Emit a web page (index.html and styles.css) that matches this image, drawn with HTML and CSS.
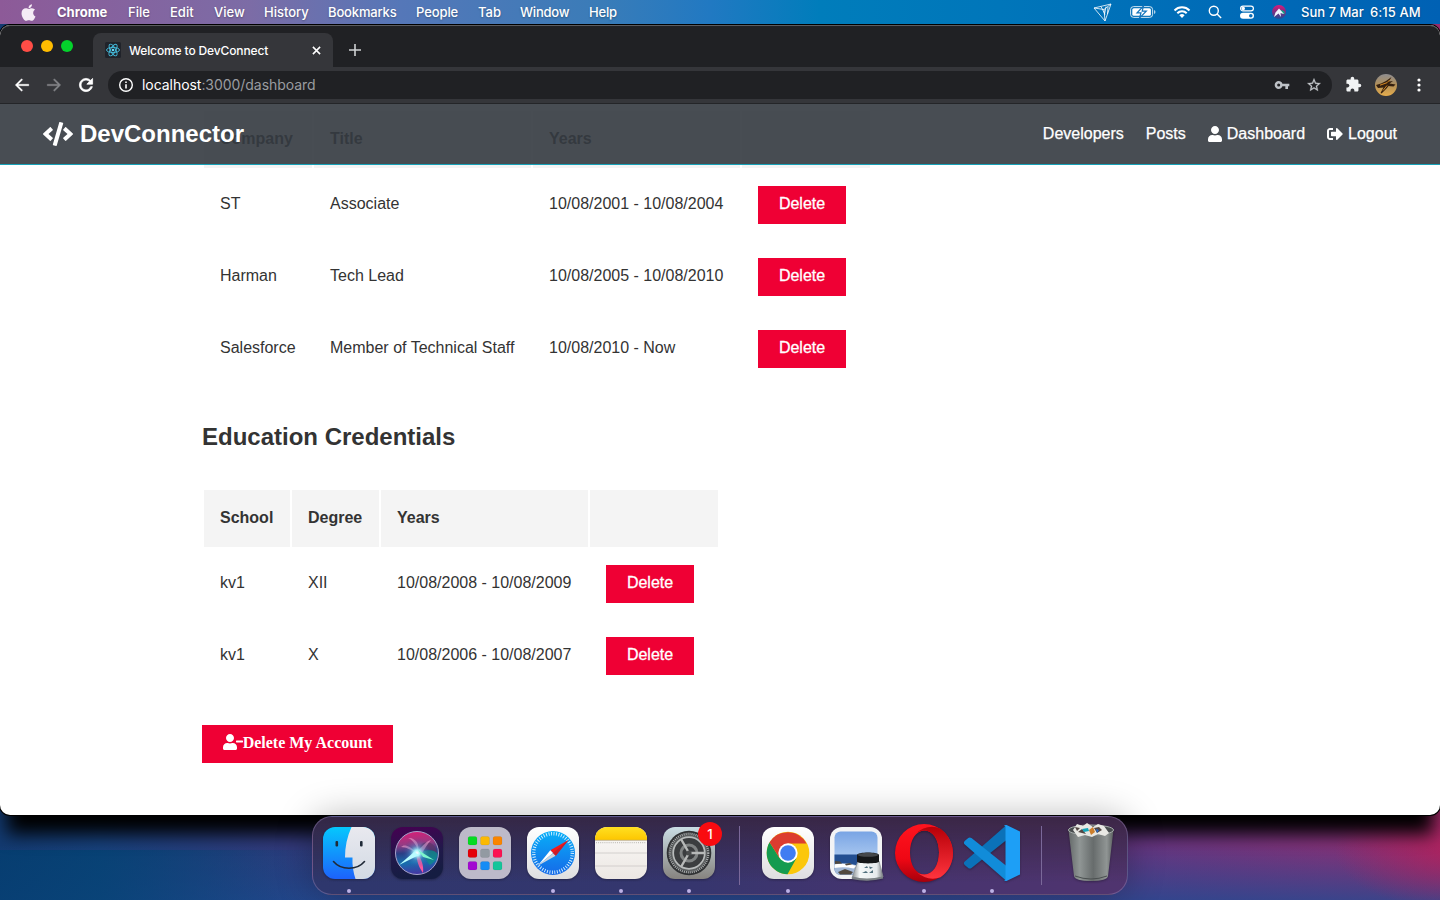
FILE: index.html
```html
<!DOCTYPE html>
<html lang="en">
<head>
<meta charset="utf-8">
<title>Welcome to DevConnect</title>
<link rel="stylesheet" href="styles.css">
</head>
<body>
<div class="desktop">
  <header class="menubar">
    <div class="menus">
      <svg class="apple" viewBox="0 0 384 512"><path d="M318.700 268.700c-.2-36.700 16.400-64.400 50-84.800-18.800-26.900-47.200-41.700-84.700-44.600-35.500-2.800-74.300 20.700-88.500 20.700-15 0-49.400-19.700-76.400-19.700C63.300 141.200 4 184.800 4 273.500q0 39.300 14.400 81.200c12.800 36.700 59 126.700 107.200 125.200 25.200-.6 43-17.900 75.800-17.900 31.800 0 48.300 17.900 76.400 17.900 48.600-.7 90.400-82.500 102.600-119.300-65.200-30.700-61.700-90-61.700-91.900zm-56.600-164.200c27.300-32.400 24.800-61.900 24-72.500-24.100 1.400-52 16.400-67.900 34.900-17.500 19.800-27.800 44.300-25.600 71.900 26.100 2 49.900-11.400 69.500-34.300z"/></svg>
      <b class="m-app">Chrome</b><span class="m-file">File</span><span class="m-edit">Edit</span><span class="m-view">View</span><span class="m-history">History</span><span class="m-book">Bookmarks</span><span class="m-people">People</span><span class="m-tab">Tab</span><span class="m-window">Window</span><span class="m-help">Help</span>
    </div>
    <div class="status">
      <svg class="s-tri" viewBox="0 0 20 20" fill="none" stroke="#fff" stroke-width=".8"><path d="M1 6l17-4-6 17zM1 6l10 1.500 7-5.500M11 7.500l1 11.500M13 4.500l-1.500 8M15 5l-.5 7M8 4.500l4 8"/></svg>
      <svg class="s-bat" viewBox="0 0 26 14"><rect x=".6" y="1.600" width="22" height="10.800" rx="3" fill="none" stroke="#fff" opacity=".8"/><rect x="2.300" y="3.300" width="18.600" height="7.400" rx="1.500" fill="#fff"/><path d="M24 5v4q1.500-.5 1.500-2T24 5z" fill="#fff" opacity=".7"/><path d="M13.500 1L7 7.800h4L9.500 13 16.300 6.200h-4.100z" fill="#fff" stroke="#1274bb" stroke-width="1.200"/></svg>
      <svg class="s-wifi" viewBox="0 0 18 14" fill="none" stroke="#fff" stroke-width="2"><path d="M1.500 5.500a10.500 10.500 0 0 1 15 0M4.300 8.300a6.600 6.600 0 0 1 9.400 0"/><path d="M9 13l-2.600-2.700a3.700 3.700 0 0 1 5.200 0z" fill="#fff" stroke="none"/></svg>
      <svg class="s-search" viewBox="0 0 14 14" fill="none" stroke="#fff" stroke-width="1.400"><circle cx="5.800" cy="5.800" r="4.500"/><path d="M9.100 9.100l4 4"/></svg>
      <svg class="s-cc" viewBox="0 0 16 14"><rect x="1.600" y="1.100" width="12.800" height="4.800" rx="2.400" fill="none" stroke="#fff" stroke-width="1.200"/><circle cx="4.300" cy="3.500" r="1.700" fill="#fff"/><rect x="1" y="7.700" width="14" height="6" rx="3" fill="#fff"/><circle cx="11.800" cy="10.700" r="1.800" fill="#086db7"/></svg>
      <svg class="s-siri" viewBox="0 0 16 16"><defs><linearGradient id="ms" x2="0" y2="1"><stop offset="0" stop-color="#e0187a"/><stop offset=".4" stop-color="#8c2a80"/><stop offset="1" stop-color="#1f4f96"/></linearGradient></defs><circle cx="8" cy="8" r="7" fill="url(#ms)"/><path d="M9 6.500c2-1 5 0 5 3l-3 .5z" fill="#15a087"/><path d="M8 4.500l5 5.500-3.500-1 .5 4-2.500-3.500L3 13l1.500-4.500z" fill="#eef4ff"/></svg>
      <span class="date">Sun 7 Mar</span><span class="time">6:15 AM</span>
    </div>
  </header>

  <main class="window">
    <div class="tabstrip">
      <div class="lights"><i class="red"></i><i class="yellow"></i><i class="green"></i></div>
      <div class="tab">
        <svg class="favicon" viewBox="0 0 16 16"><rect width="16" height="16" rx="1.500" fill="#20232a"/><g fill="none" stroke="#45bfe0" stroke-width=".9"><ellipse cx="8" cy="8" rx="6.500" ry="2.600"/><ellipse cx="8" cy="8" rx="6.500" ry="2.600" transform="rotate(60 8 8)"/><ellipse cx="8" cy="8" rx="6.500" ry="2.600" transform="rotate(120 8 8)"/></g><circle cx="8" cy="8" r="1.300" fill="#61dafb"/></svg>
        <span class="tab-title">Welcome to DevConnect</span>
        <svg class="close" viewBox="0 0 10 10"><path d="M1 1l8 8M9 1L1 9" stroke="#fff" stroke-width="1.700"/></svg>
      </div>
      <svg class="plus" viewBox="0 0 12 12"><path d="M6 0v12M0 6h12" stroke="#d0d2d4" stroke-width="1.600"/></svg>
    </div>
    <div class="toolbar">
      <svg class="t-ico" viewBox="0 0 24 24"><path d="M21 11H6.830l6-6L11.400 3.600 3 12l8.400 8.400 1.430-1.400-6-6H21z" fill="#fff" stroke="#fff" stroke-width=".5"/></svg>
      <svg class="t-ico" viewBox="0 0 24 24"><path d="M3 11h14.170l-6-6 1.430-1.400L21 12l-8.400 8.400-1.430-1.400 6-6H3z" fill="#828387" stroke="#828387" stroke-width=".5"/></svg>
      <svg class="t-ico" viewBox="0 0 24 24"><path d="M17.650 6.350C16.200 4.900 14.210 4 12 4c-4.420 0-7.990 3.580-7.990 8s3.570 8 7.990 8c3.730 0 6.840-2.550 7.730-6h-2.080c-.82 2.330-3.040 4-5.650 4-3.310 0-6-2.690-6-6s2.690-6 6-6c1.660 0 3.140.69 4.220 1.780L13 11h7V4z" fill="#fff" stroke="#fff" stroke-width=".9" transform="translate(-1.200 -1.200) scale(1.100)"/></svg>
      <div class="omnibox">
        <svg class="info" viewBox="0 0 16 16"><circle cx="8" cy="8" r="6.300" fill="none" stroke="#fff" stroke-width="1.400"/><path d="M8 7.200v4.200M8 4.500v1.500" stroke="#fff" stroke-width="1.600"/></svg>
        <span class="url"><em>localhost</em>:3000/dashboard</span>
        <svg class="key" viewBox="0 0 24 24"><path d="M12.650 10C11.830 7.670 9.610 6 7 6c-3.310 0-6 2.690-6 6s2.690 6 6 6c2.610 0 4.830-1.670 5.650-4H17v4h4v-4h2v-4zM7 14.300a2.300 2.300 0 1 1 0-4.600 2.300 2.300 0 0 1 0 4.600z" fill="#bdc1c6"/></svg>
        <svg class="star" viewBox="0 0 24 24"><path d="M22 9.240l-7.190-.62L12 2 9.190 8.630 2 9.240l5.460 4.730L5.820 21 12 17.270 18.180 21l-1.630-7.030zM12 15.400l-3.760 2.270 1-4.280-3.320-2.880 4.380-.38L12 6.100l1.710 4.040 4.380.38-3.320 2.880 1 4.280z" fill="#c4c7ca" stroke="#c4c7ca" stroke-width=".4"/></svg>
      </div>
      <svg class="ext" viewBox="0 0 24 24"><path d="M20.500 11H19V7c0-1.100-.9-2-2-2h-4V3.500C13 2.120 11.880 1 10.500 1S8 2.120 8 3.500V5H4c-1.100 0-1.990.9-1.990 2v3.800H3.500c1.490 0 2.700 1.210 2.700 2.700s-1.210 2.700-2.700 2.700H2V20c0 1.100.9 2 2 2h3.800v-1.500c0-1.490 1.210-2.700 2.700-2.700s2.700 1.210 2.700 2.700V22H17c1.100 0 2-.9 2-2v-4h1.500a2.500 2.500 0 0 0 0-5z" fill="#f1f3f4"/></svg>
      <svg class="avatar" viewBox="0 0 22 22"><defs><linearGradient id="sky" x2="0" y2="1"><stop offset="0" stop-color="#8e8d90"/><stop offset=".5" stop-color="#b39058"/><stop offset="1" stop-color="#e6ad4c"/></linearGradient></defs><circle cx="11" cy="11" r="11" fill="url(#sky)"/><path d="M1 11l5-1.500 5-2.500 5.500-4-2.500 4.500 4-.5-3.500 2.500 6 1-2 2-5-.5-2 2.500-5 5-1-.5 3-5.500-5.500.5z" fill="#35200f"/><path d="M5 11.200l7-2.500 3-3M12 11.500l-4 5" stroke="#d98a22" fill="none"/></svg>
      <svg class="dots" viewBox="0 0 4 14" fill="#fff"><circle cx="2" cy="2" r="1.600"/><circle cx="2" cy="7" r="1.600"/><circle cx="2" cy="12" r="1.600"/></svg>
    </div>

    <div class="page">
      <nav class="navbar">
        <div class="brand"><svg viewBox="0 0 640 512"><path d="M278.900 511.500l-61-17.700c-6.400-1.800-10-8.500-8.200-14.900L346.200 8.700c1.800-6.400 8.500-10 14.900-8.200l61 17.700c6.400 1.800 10 8.500 8.200 14.900L293.800 503.300c-1.900 6.400-8.500 10.100-14.900 8.200zm-114-112.200l43.500-46.400c4.600-4.900 4.300-12.700-.8-17.200L117 256l90.600-79.700c5.100-4.500 5.500-12.300.8-17.200l-43.500-46.400c-4.500-4.800-12.100-5.100-17-.5L3.800 247.200c-5.100 4.700-5.100 12.800 0 17.500l144.100 135.100c4.900 4.600 12.500 4.400 17-.5zm327.200.6l144.100-135.100c5.100-4.700 5.100-12.800 0-17.500L492.100 112.100c-4.800-4.500-12.400-4.300-17 .5L431.600 159c-4.600 4.900-4.300 12.700.8 17.200L523 256l-90.600 79.700c-5.100 4.500-5.500 12.300-.8 17.200l43.500 46.400c4.500 4.900 12.100 5.100 17 .6z"/></svg><span>DevConnector</span></div>
        <div class="links">
          <a>Developers</a><a>Posts</a>
          <a><svg class="i-user" viewBox="0 0 448 512"><path id="user" d="M224 256c70.700 0 128-57.300 128-128S294.700 0 224 0 96 57.300 96 128s57.300 128 128 128zm89.600 32h-16.700c-22.200 10.200-46.900 16-72.900 16s-50.600-5.800-72.900-16h-16.700C60.200 288 0 348.200 0 422.400V464c0 26.500 21.500 48 48 48h352c26.500 0 48-21.500 48-48v-41.600c0-74.200-60.200-134.400-134.400-134.400z"/></svg>Dashboard</a>
          <a><svg class="i-out" viewBox="0 0 512 512"><path d="M497 273L329 441c-15 15-41 4.500-41-17v-96H152c-13.300 0-24-10.700-24-24v-96c0-13.300 10.700-24 24-24h136V88c0-21.400 25.900-32 41-17l168 168c9.300 9.400 9.300 24.600 0 34zM192 436v-40c0-6.600-5.400-12-12-12H96c-17.700 0-32-14.300-32-32V160c0-17.700 14.300-32 32-32h84c6.600 0 12-5.400 12-12V76c0-6.600-5.400-12-12-12H96c-53 0-96 43-96 96v192c0 53 43 96 96 96h84c6.600 0 12-5.400 12-12z"/></svg>Logout</a>
        </div>
      </nav>
      <section class="container">
        <table class="table exp">
          <colgroup><col class="c-company"><col class="c-title"><col class="c-years"><col class="c-action"></colgroup>
          <thead><tr><th>Company</th><th>Title</th><th>Years</th><th></th></tr></thead>
          <tbody>
            <tr><td>ST</td><td>Associate</td><td>10/08/2001 - 10/08/2004</td><td><button class="btn">Delete</button></td></tr>
            <tr><td>Harman</td><td>Tech Lead</td><td>10/08/2005 - 10/08/2010</td><td><button class="btn">Delete</button></td></tr>
            <tr><td>Salesforce</td><td>Member of Technical Staff</td><td>10/08/2010 - Now</td><td><button class="btn">Delete</button></td></tr>
          </tbody>
        </table>
        <h2>Education Credentials</h2>
        <table class="table edu">
          <colgroup><col class="c-school"><col class="c-degree"><col class="c-years"><col class="c-action"></colgroup>
          <thead><tr><th>School</th><th>Degree</th><th>Years</th><th></th></tr></thead>
          <tbody>
            <tr><td>kv1</td><td>XII</td><td>10/08/2008 - 10/08/2009</td><td><button class="btn">Delete</button></td></tr>
            <tr><td>kv1</td><td>X</td><td>10/08/2006 - 10/08/2007</td><td><button class="btn">Delete</button></td></tr>
          </tbody>
        </table>
        <button class="btn account"><svg viewBox="0 0 640 512"><use href="#user"/><path d="M624 208H432c-8.800 0-16 7.200-16 16v32c0 8.800 7.200 16 16 16h192c8.800 0 16-7.200 16-16v-32c0-8.800-7.200-16-16-16z"/></svg><span>Delete My Account</span></button>
      </section>
    </div>
  </main>

  <footer class="dock">
    <div class="slot running"><svg viewBox="0 0 52 52"><defs><linearGradient id="fb" x2="0" y2="1"><stop offset="0" stop-color="#05c8fd"/><stop offset="1" stop-color="#1d62fb"/></linearGradient><linearGradient id="fw" x2="0" y2="1"><stop offset="0" stop-color="#e9e9ef"/><stop offset="1" stop-color="#d2dae4"/></linearGradient><clipPath id="sq"><rect width="52" height="52" rx="12"/></clipPath></defs><g clip-path="url(#sq)"><path d="M0 0h52v52H0z" fill="url(#fb)"/><path d="M28.500 0C24 10 22 20 22 30.500h7.500C29 38 30.500 46 32.500 52H52V0z" fill="url(#fw)"/></g><path d="M10.500 34.500C18 43.500 34 43.500 41.500 34.500" fill="none" stroke="#202a38" stroke-width="1.600" stroke-linecap="round"/><rect x="12.500" y="14" width="2.600" height="5.500" rx="1" fill="#202a38"/><rect x="37" y="14" width="2.600" height="5.500" rx="1" fill="#202a38"/></svg></div>

    <div class="slot"><svg viewBox="0 0 52 52"><defs><linearGradient id="sb" x2=".2" y2="1"><stop offset="0" stop-color="#470052"/><stop offset=".6" stop-color="#20194a"/><stop offset="1" stop-color="#151d42"/></linearGradient><radialGradient id="so"><stop offset="0" stop-color="#fff"/><stop offset=".2" stop-color="#a5f3fa"/><stop offset=".5" stop-color="#5aa6dc" stop-opacity=".4"/><stop offset="1" stop-color="#3b3594" stop-opacity="0"/></radialGradient><linearGradient id="sc" x2=".1" y2="1"><stop offset="0" stop-color="#e01a75"/><stop offset=".32" stop-color="#963b83"/><stop offset=".52" stop-color="#2a3f86"/><stop offset=".75" stop-color="#156fae"/><stop offset="1" stop-color="#413aa4"/></linearGradient></defs><rect width="52" height="52" rx="12" fill="url(#sb)"/><circle cx="26" cy="26" r="21.500" fill="url(#sc)" stroke="#a8a3cc" stroke-width="1"/><path d="M27 25C30 10 45 14 46 26c-5-4-12-5-19-1z" fill="#5f3565" opacity=".7"/><path d="M30 25c8-3 14-2 16.500 2-1 6-4 9-8 11z" fill="#108f83" opacity=".7"/><path d="M26 26C18 18 13 17 10 20c5 0 10 3 16 6zM27 24c-2-8-7-12-10-13 7-1 12 6 10 13zM27 24c5-6 9-10 13-11-4 4-6 9-9 13z" fill="#f5a3d1" opacity=".6"/><path d="M26 26c-1 8 2 14 6 20 1-8-2-15-6-20z" fill="#fa569e"/><circle cx="26" cy="26" r="15" fill="url(#so)"/><path d="M8 38l15-13 5 3z" fill="#b8fdff"/><path d="M27 23l16 10-11-3z" fill="#7cf5cb"/></svg></div>

    <div class="slot"><svg viewBox="0 0 52 52"><rect width="52" height="52" rx="12" fill="#bdbac9"/><g stroke="#000" stroke-opacity=".12" stroke-width=".5"><rect x="9" y="9.500" width="9" height="8.500" rx="1.800" fill="#05db22"/><rect x="21.500" y="9.500" width="9" height="8.500" rx="1.800" fill="#fbb903"/><rect x="34" y="9.500" width="9" height="8.500" rx="1.800" fill="#fa8500"/><rect x="9" y="22" width="9" height="8.500" rx="1.800" fill="#e40009"/><rect x="21.500" y="22" width="9" height="8.500" rx="1.800" fill="#929aa2"/><rect x="34" y="22" width="9" height="8.500" rx="1.800" fill="#fb1352"/><rect x="9" y="34.500" width="9" height="8.500" rx="1.800" fill="#a209d1"/><rect x="21.500" y="34.500" width="9" height="8.500" rx="1.800" fill="#168cf5"/><rect x="34" y="34.500" width="9" height="8.500" rx="1.800" fill="#14c59a"/></g></svg></div>

    <div class="slot running"><svg viewBox="0 0 52 52"><defs><linearGradient id="wh" x2="0" y2="1"><stop offset="0" stop-color="#fff"/><stop offset="1" stop-color="#dedee0"/></linearGradient><linearGradient id="sf" x2="0" y2="1"><stop offset="0" stop-color="#08aff8"/><stop offset="1" stop-color="#1669e8"/></linearGradient></defs><rect width="52" height="52" rx="12" fill="url(#wh)"/><circle cx="26" cy="26" r="22" fill="url(#sf)"/><circle cx="26" cy="26" r="19.300" fill="none" stroke="#d8f1ff" stroke-width="3.400" stroke-dasharray=".9 1.626"/><path d="M41.500 13L28.700 28.700 23.300 23.300z" fill="#f5191b"/><path d="M10.500 39L23.300 23.300 26 26z" fill="#fff"/><path d="M10.500 39L26 26l2.700 2.700z" fill="#cbd4de"/><path d="M41.500 13L28.700 28.700 26 26z" fill="#c71c2a"/></svg></div>

    <div class="slot running"><svg viewBox="0 0 52 52"><defs><linearGradient id="nt" x2="0" y2="1"><stop offset="0" stop-color="#fbfaf8"/><stop offset="1" stop-color="#ece7e3"/></linearGradient><linearGradient id="ny" x2="0" y2="1"><stop offset="0" stop-color="#ffe022"/><stop offset="1" stop-color="#fdc600"/></linearGradient></defs><g clip-path="url(#sq)"><path d="M0 0h52v52H0z" fill="url(#nt)"/><path d="M0 0h52v13H0z" fill="url(#ny)"/><path d="M0 13.300h52" stroke="#b9a77b" stroke-width=".8"/><path d="M0 26h52M0 39h52" stroke="#cfccca" stroke-width=".9"/><path d="M1 15.600h50" stroke="#c4c1bd" stroke-width="1.200" stroke-dasharray="1 1.100"/></g></svg></div>

    <div class="slot running"><svg viewBox="0 0 52 52"><defs><linearGradient id="pg" x2="0" y2="1"><stop offset="0" stop-color="#cadde4"/><stop offset="1" stop-color="#86837f"/></linearGradient></defs><rect width="52" height="52" rx="12" fill="url(#pg)"/><circle cx="26" cy="26" r="22.300" fill="#303234"/><circle cx="26" cy="26" r="18.500" fill="#5d6061"/><circle cx="26" cy="26" r="19.300" fill="none" stroke="#a8abac" stroke-width="2.200" stroke-dasharray="1.100 .92"/><circle cx="26" cy="26" r="15.800" fill="#3b3d3f" stroke="#b8bbbb" stroke-width="1.700"/><circle cx="26" cy="26" r="8" fill="none" stroke="#808383" stroke-width="3"/><path d="M26 26h16M26 26l-8-14M26 26l-8 14" stroke="#b7b9b8" stroke-width="2.400"/><circle cx="26" cy="26" r="2.600" fill="#4a4c4d"/></svg><span class="badge">1</span></div>

    <div class="sep"></div>

    <div class="slot running"><svg viewBox="0 0 52 52"><rect width="52" height="52" rx="12" fill="url(#wh)"/><circle cx="26" cy="26" r="21.300" fill="#fbc70b"/><path d="M7.550 15.350A21.300 21.300 0 0 0 25.500 47.300L34.300 31.500 26 35.500 17.500 31z" fill="#159b50"/><path d="M7.550 15.350L17.600 31 26 16.500h18.500A21.300 21.300 0 0 0 7.550 15.350z" fill="#dc3d30"/><circle cx="26" cy="26" r="9.700" fill="#fff"/><circle cx="26" cy="26" r="7.800" fill="#407df2"/></svg></div>

    <div class="slot"><svg class="preview" viewBox="0 0 52 52"><defs><linearGradient id="pv" x2="0" y2="1"><stop offset="0" stop-color="#79a4e4"/><stop offset="1" stop-color="#c9e0f8"/></linearGradient><linearGradient id="jar" x2="1"><stop offset="0" stop-color="#858b8e"/><stop offset=".25" stop-color="#f4f8f9"/><stop offset=".8" stop-color="#e6eaec"/><stop offset="1" stop-color="#777c80"/></linearGradient></defs><rect width="52" height="52" rx="12" fill="#f2f3f5"/><rect x="4.500" y="4.500" width="43" height="43" rx="6" fill="url(#pv)"/><path d="M4.500 27.500h43V42a5.500 5.500 0 0 1-5.500 5.500H10A5.500 5.500 0 0 1 4.500 42z" fill="#234f91"/><path d="M4.500 36l7 1 8-.5 8 2V47.500H10A5.500 5.500 0 0 1 4.500 42z" fill="#a3b9d8"/><path d="M4.500 37.500q10-2.500 22 1.500l-3 2.500q-9-2-19-.5z" fill="#fff"/><path d="M5 34l5 .5 2 2-7 .5zM8 45l7-3 8 3-2 2.500H10zM15 37l5-1 2 1.500-6 1z" fill="#51493f"/><path d="M28 34h21l4 16q-14 5-31 1z" fill="url(#jar)" stroke="#8d9396" stroke-width=".8"/><path d="M22.500 49.500q14 4 30 0l.7 2q-15 4-31.500.5z" fill="#7c8286"/><path d="M27 28c0-3.500 22-3.500 22 0v6.500c0 2.500-22 2.500-22 0z" fill="#151719"/><ellipse cx="38" cy="27.800" rx="10.500" ry="2" fill="#45484b"/><path d="M34 41l3-2 1 2zM39 39.500l4 1-3 1.500zM32 46l4-2 2 2zM39 46l4-3v3z" fill="#50707e"/></svg></div>

    <div class="slot running"><svg class="big" viewBox="0 0 58 58"><defs><linearGradient id="op" x2="0" y2="1"><stop offset="0" stop-color="#ff141f"/><stop offset=".6" stop-color="#ef0714"/><stop offset="1" stop-color="#a6000c"/></linearGradient><linearGradient id="or" x2="0" y2="1"><stop offset="0" stop-color="#b70008"/><stop offset="1" stop-color="#ff343e"/></linearGradient></defs><path d="M29 0a29 29 0 1 0 0 58 29 29 0 0 0 0-58zM29.500 6.500C38 6.500 44 16 44 28.500S38 50.500 29.500 50.500 15 41 15 28.500 21 6.500 29.500 6.500z" fill="url(#op)" fill-rule="evenodd"/><path d="M20 10Q33-1 45.500 4.800C62 17 62 42 45.500 53.200Q33 58 20 47q4 3.500 9.500 3.500C38 50.500 44 41 44 28.500S38 6.500 29.500 6.500Q24 6.500 20 10z" fill="url(#or)"/></svg></div>

    <div class="slot running"><svg class="big" viewBox="0 0 58 58"><path d="M43.500 1L1.800 37.500Q0 39 1.700 41l3.500 3q1.500 1.200 3.300 0L43.500 16z" fill="#0b72b9"/><path d="M43.500 57L1.800 20.500Q0 19 1.700 17l3.500-3q1.500-1.200 3.300 0L43.500 42z" fill="#118cd9"/><path d="M43.500 1L57 7.500V50.500L43.500 57q-1.500.3-2.500-.7l1.500-.3V2.500L41 1.700q1-1 2.500-.7z" fill="#1d9ff6"/></svg></div>

    <div class="sep"></div>

    <div class="slot"><svg class="trash" viewBox="0 0 48 60"><defs><linearGradient id="tr" x2="1"><stop offset="0" stop-color="#646969"/><stop offset=".25" stop-color="#909695"/><stop offset=".55" stop-color="#676c6c"/><stop offset=".85" stop-color="#909594"/><stop offset="1" stop-color="#5a5f5f"/></linearGradient></defs><path d="M1.500 8q22 8 45 0l-5.500 46q-1 5-17 5T7 54z" fill="url(#tr)"/><ellipse cx="24" cy="8" rx="22.500" ry="5" fill="#484c4e" stroke="#a6adab" stroke-width="1"/><path d="M6 8l4-6 6 2 4-3 6 4 5-3 6 2 5 7-4 3-7-2-6 3-7-2-7 2z" fill="#e8e8e4"/><path d="M11 10l4-3 4 5zM27 6l5-1 3 3-5 3zM8 5l5 1-3 3z" fill="#534744"/><path d="M15 7l6-1 1 3-5 1z" fill="#16a4b8"/><path d="M22 8l4-3 2 5-4 3z" fill="#cc7f2d"/><path d="M29 7l3 1-2 3z" fill="#2469c9"/><path d="M8 54q16 6 32 0" fill="none" stroke="#4b5050"/></svg></div>
  </footer>
</div>
</body>
</html>
```

FILE: styles.css
```css
* { box-sizing: border-box; }
body { margin: 0; font-family: "Liberation Sans", Arial, sans-serif; }
svg { display: block; flex: none; }

.desktop {
  width: 1440px; height: 900px; overflow: hidden;
  display: flex; flex-direction: column; align-items: center;
  background:
    linear-gradient(90deg, rgba(4, 62, 112, .85) 0, rgba(4, 66, 115, .8) 100px, rgba(10, 66, 120, 0) 330px) 0 850px / 100% 50px no-repeat,
    radial-gradient(ellipse 120px 60px at 1455px 850px, rgba(180, 32, 92, .8), rgba(180, 32, 92, 0)),
    linear-gradient(180deg, rgba(34, 74, 145, 0) 845px, rgba(34, 74, 145, .75) 900px),
    linear-gradient(90deg, #133a70 0, #17407a 100px, #333a7c 290px, #343d78 700px, #663680 1150px, #813278 1330px, #962c6b 1440px);
}

/* Menu bar */
.menubar {
  width: 1440px; height: 24px; flex: none;
  display: flex; justify-content: space-between; align-items: center;
  color: #fff; font: 500 13px Inter, sans-serif;
  text-shadow: 0 1px 2px rgba(0, 0, 0, .3);
  background: linear-gradient(90deg, #8d5a98 0, #7c6ca6 250px, #5577b8 400px, #3a7cb8 600px, #2179c2 710px, #007dbb 820px, #0076ba 1000px, #0061b4 1440px);
}
.menus { display: flex; align-items: center; padding-left: 21px; white-space: nowrap; }
.apple { width: 15px; height: 19px; fill: #f4ebf5; margin-right: 21px; }
.m-app { width: 71px; font-weight: 700; }
.m-file { width: 42px; }
.m-edit { width: 44px; }
.m-view { width: 50px; }
.m-history { width: 64px; }
.m-book { width: 88px; letter-spacing: -.15px; }
.m-people { width: 62px; letter-spacing: -.1px; }
.m-tab { width: 42px; }
.m-window { width: 69px; letter-spacing: -.2px; }
.m-help { letter-spacing: -.2px; }
.status { display: flex; align-items: center; padding-right: 18px; }
.s-tri { width: 20px; height: 20px; margin-right: 17px; }
.s-bat { width: 26px; height: 14px; margin-right: 17px; }
.s-wifi { width: 18px; height: 14px; margin-right: 17px; }
.s-search { width: 14px; height: 14px; margin-right: 17px; }
.s-cc { width: 16px; height: 14px; margin-right: 16px; }
.s-siri { width: 16px; height: 16px; margin-right: 14px; }
.date { width: 69px; margin-top: -1px; }
.time { width: 52px; margin-top: -1px; letter-spacing: .1px; }
.date, .time { white-space: nowrap; }

/* Browser window */
.window {
  width: 1440px; height: 790px; margin-top: 1px; flex: none;
  display: flex; flex-direction: column; overflow: hidden;
  border-radius: 10px; background: #fff;
  box-shadow: 0 0 0 1px #000, 0 26px 18px -7px #000;
}
.tabstrip {
  height: 42px; flex: none; display: flex; align-items: flex-end;
  padding-left: 21px; background: #202124;
  border-radius: 10px 10px 0 0;
  box-shadow: inset 0 1px #5b5c5f;
}
.lights { display: flex; gap: 8px; margin: 0 20px 15px 0; }
.lights i { width: 12px; height: 12px; border-radius: 50%; }
.red { background: #ff4d46; }
.yellow { background: #ffbc00; }
.green { background: #04d22c; }
.tab {
  width: 240px; height: 34px; padding: 0 12px 0 12px;
  display: flex; align-items: center;
  background: #35363a; border-radius: 8px 8px 0 0;
}
.favicon { width: 16px; height: 16px; margin-right: 8px; }
.tab-title { flex: 1; color: #fff; font: 500 12px Inter, sans-serif; letter-spacing: -.13px; white-space: nowrap; }
.close { width: 9px; height: 9px; }
.plus { width: 12px; height: 12px; margin: 0 0 11px 16px; }
.toolbar {
  height: 37px; flex: none; display: flex; align-items: center;
  padding: 0 19px 1px 13px; background: #35363a;
  border-bottom: 1px solid #242528;
}
.t-ico { width: 18px; height: 18px; margin-right: 14px; }
.omnibox {
  flex: 1; height: 28px; margin: 0 13px 0 -1px; padding: 0 10px;
  display: flex; align-items: center; background: #202124; border-radius: 14px;
}
.info { width: 16px; height: 16px; margin-right: 8px; }
.url { flex: 1; color: #9a9ca0; font: 14px Inter, sans-serif; letter-spacing: -.05px; }
.url em { color: #fff; font-style: normal; }
.key { width: 16px; height: 16px; margin-right: 16px; }
.star { width: 16px; height: 16px; }
.ext { width: 17px; height: 17px; margin-right: 13px; }
.avatar { width: 22px; height: 22px; margin-right: 20px; }
.dots { width: 4px; height: 14px; }

/* Page */
.page { flex: 1; display: grid; overflow: hidden; }
.navbar {
  grid-area: 1 / 1; align-self: start; z-index: 1; height: 61px;
  display: flex; justify-content: space-between; align-items: center;
  padding: 0 43px; color: #fff;
  background: rgba(52, 58, 64, .9); border-bottom: 1px solid #17a2b8;
}
.navbar svg { fill: #fff; }
.brand { display: flex; align-items: center; gap: 7px; padding-bottom: 1px; font-size: 24px; font-weight: 700; }
.brand svg { width: 30px; height: 24px; }
.links { display: flex; gap: 22px; padding-bottom: 1px; font-size: 16px; }
.links a { display: flex; align-items: center; -webkit-text-stroke: .25px; }
.i-user { width: 14px; height: 16px; margin-right: 5px; }
.i-out { width: 16px; height: 16px; margin-right: 5px; }

.container {
  grid-area: 1 / 1; padding: 5px 202px 0; color: #333; font-size: 16px;
}
.table { table-layout: fixed; border-collapse: separate; border-spacing: 2px; }
.exp { width: 670px; }
.edu { width: 518px; }
.c-company { width: 108px; }
.c-title { width: 217px; }
.c-school { width: 86px; }
.c-degree { width: 87px; }
.c-years { width: 207px; }
.c-action { width: 128px; }
th { height: 57px; padding: 0 16px 2px; text-align: left; background: #f4f4f4; }
td { height: 70px; padding: 0 16px 3px; white-space: nowrap; }
td:last-child { padding-bottom: 0; }
h2 { margin: 32px 0; font-size: 24px; line-height: 38px; }
.btn {
  display: flex; align-items: center; justify-content: center;
  width: 88px; height: 38px; padding: 0 0 3px; border: 0;
  color: #fff; background: #ef0034; -webkit-text-stroke: .3px;
  font: 16px "Liberation Sans", Arial, sans-serif;
}
.account {
  width: 191px; margin-top: 32px; -webkit-text-stroke: 0;
  font: 700 16px "Liberation Serif", "Times New Roman", serif;
}
.account svg { width: 20px; height: 16px; margin-bottom: 1px; fill: #fff; }

/* Dock */
.dock {
  z-index: 2; width: 816px; height: 79px; margin-top: 1px; flex: none;
  display: flex; padding: 0 2px; border-radius: 20px;
  border: 1px solid rgba(160, 140, 190, .4);
  background:
    linear-gradient(180deg, rgba(54, 34, 56, .75), rgba(54, 44, 100, 0) 85%),
    linear-gradient(90deg, #2e376d, #35366e 45%, #45346f 70%, #50346f);
  box-shadow: 0 0 36px rgba(0, 0, 0, .28);
}
.slot { position: relative; width: 68px; display: flex; justify-content: center; align-items: flex-start; }
.slot svg { width: 52px; height: 52px; margin-top: 10px; overflow: visible; filter: drop-shadow(0 1px 1px rgba(0, 0, 0, .3)); }
.slot .big { width: 58px; height: 58px; margin-top: 7px; }
.slot .trash { width: 48px; height: 60px; margin-top: 5px; }
.running::after {
  content: ""; position: absolute; left: 32px; top: 72px;
  width: 4px; height: 4px; border-radius: 50%; background: #bdb2e6;
}
.badge {
  position: absolute; left: 43px; top: 5px; width: 24px; height: 24px;
  border-radius: 50%; background: #f90b10; color: #fff;
  font: 500 13px/24px Inter, sans-serif; text-align: center;
}
.sep { width: 1px; height: 59px; margin: 9px 14px 0 16px; background: #7a6899; }
.sep ~ .sep { margin: 9px 15px 0; }
```
